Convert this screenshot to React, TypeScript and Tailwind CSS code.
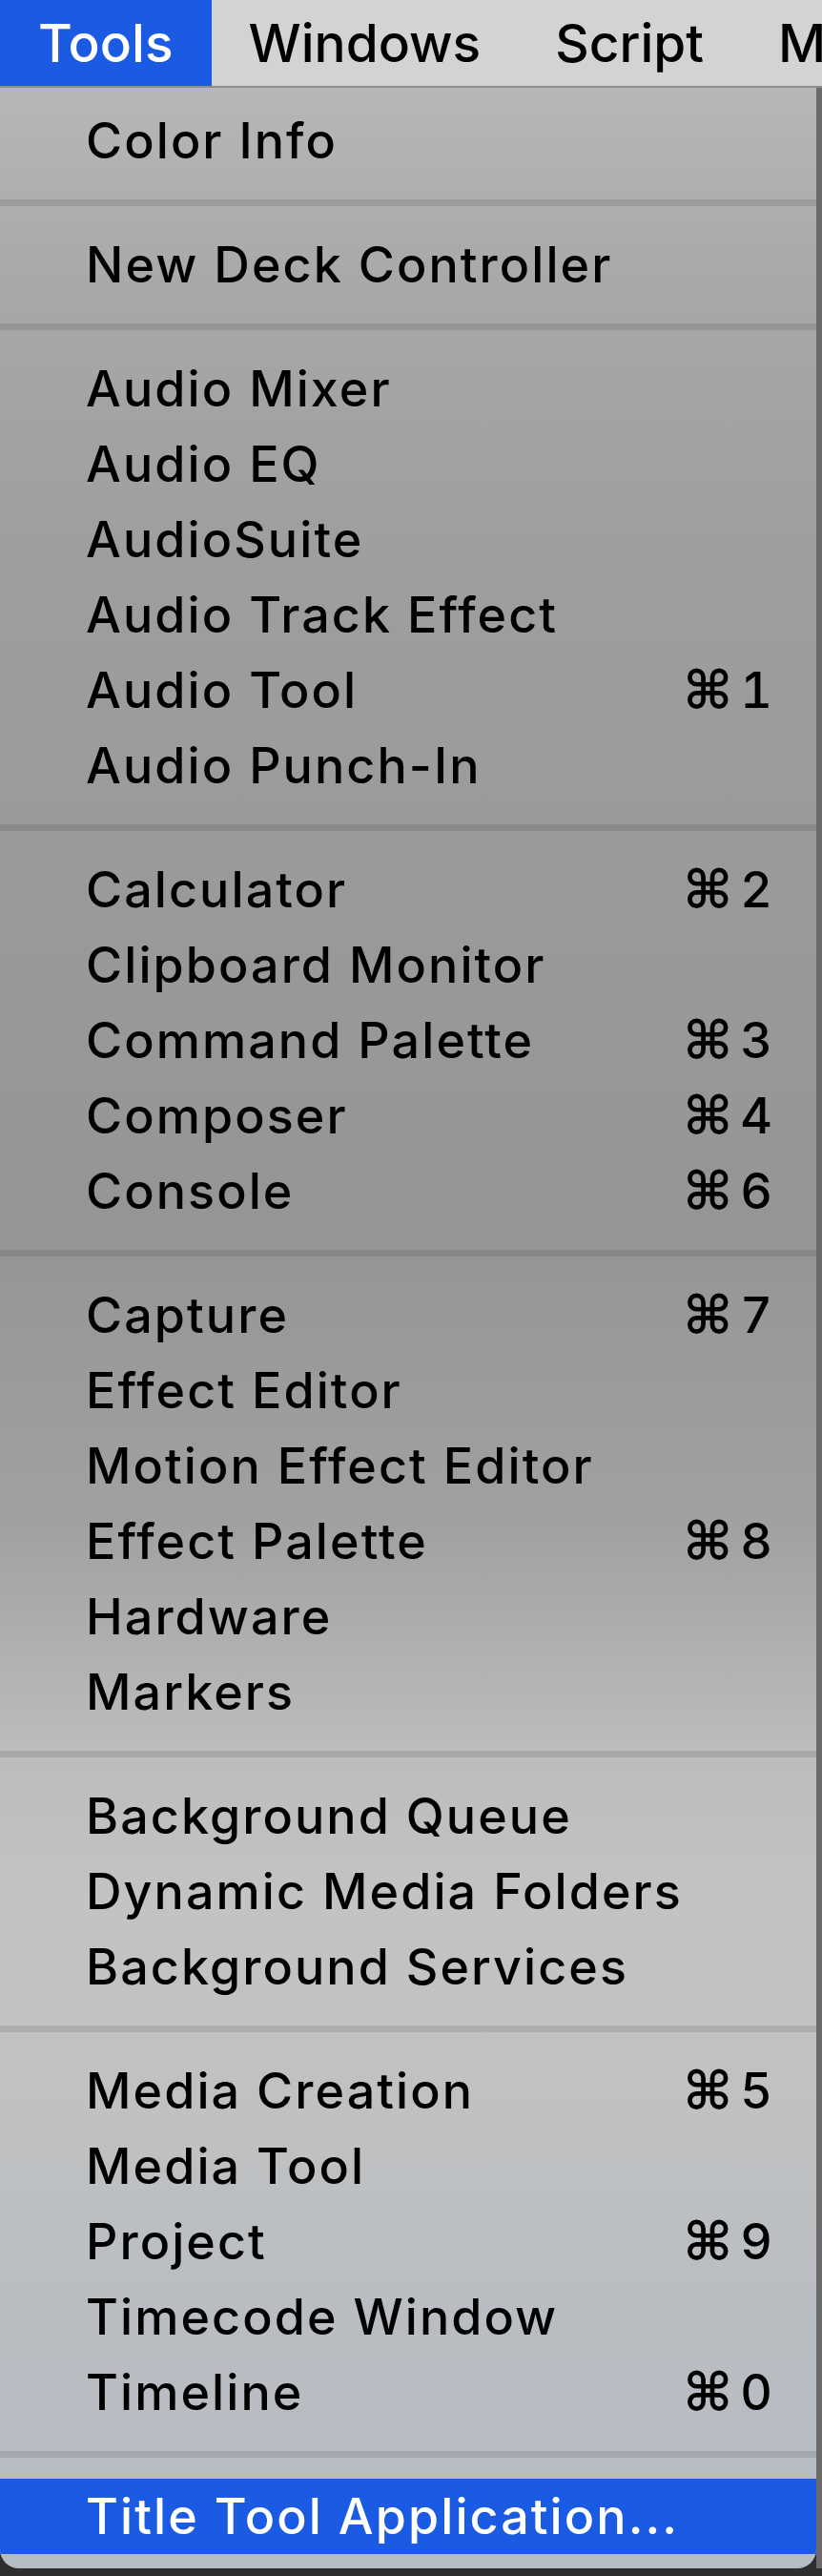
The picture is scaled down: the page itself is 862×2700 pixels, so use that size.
import React from "react";

type Item = { label: string; key?: string; active?: boolean };

const groups: Item[][] = [
  [{ label: "Color Info" }],
  [{ label: "New Deck Controller" }],
  [
    { label: "Audio Mixer" },
    { label: "Audio EQ" },
    { label: "AudioSuite" },
    { label: "Audio Track Effect" },
    { label: "Audio Tool", key: "1" },
    { label: "Audio Punch-In" },
  ],
  [
    { label: "Calculator", key: "2" },
    { label: "Clipboard Monitor" },
    { label: "Command Palette", key: "3" },
    { label: "Composer", key: "4" },
    { label: "Console", key: "6" },
  ],
  [
    { label: "Capture", key: "7" },
    { label: "Effect Editor" },
    { label: "Motion Effect Editor" },
    { label: "Effect Palette", key: "8" },
    { label: "Hardware" },
    { label: "Markers" },
  ],
  [
    { label: "Background Queue" },
    { label: "Dynamic Media Folders" },
    { label: "Background Services" },
  ],
  [
    { label: "Media Creation", key: "5" },
    { label: "Media Tool" },
    { label: "Project", key: "9" },
    { label: "Timecode Window" },
    { label: "Timeline", key: "0" },
  ],
  [{ label: "Title Tool Application...", active: true }],
];

const MenuRow = ({ item }: { item: Item }) => {
  return (
    <div
      className={
        item.active
          ? "flex h-[79px] items-center justify-between bg-[#1b5be3] pl-[90px] pr-[44px] text-white"
          : "flex h-[79px] items-center justify-between pl-[90px] pr-[44px] text-black"
      }
    >
      <span>{item.label}</span>
      {item.key && (
        <span className="flex items-center gap-[6px] tabular-nums">
          <span className="font-['DejaVu_Sans',sans-serif] text-[56px] font-bold">⌘</span>
          <span>{item.key}</span>
        </span>
      )}
    </div>
  );
};

export default function App() {
  return (
    <div className="h-[2700px] w-[862px] overflow-hidden bg-[#2e2e2e] font-['Inter','DejaVu_Sans',sans-serif] font-medium">
      {/* menu bar */}
      <div className="flex h-[92px] items-center overflow-hidden whitespace-nowrap border-b-2 border-[#8c8c8c] bg-[#d3d3d3] text-[55px] text-black">
        <div className="flex h-full items-center bg-[#1b5be3] px-[40px] text-white">Tools</div>
        <div className="px-[39px]">Windows</div>
        <div className="px-[39px]">Script</div>
        <div className="px-[39px]">Marketplace</div>
      </div>

      <div className="flex">
        <div className="w-[856px] overflow-hidden rounded-b-[20px] bg-[linear-gradient(180deg,#b7b7b7_0%,#a8a8a8_8%,#9e9e9e_19%,#999999_35%,#959595_46%,#a1a1a1_58%,#bcbcbc_67%,#c3c3c3_73%,#c0c1c2_81%,#b8bdc2_91%,#b5bcc3_100%)] pb-[15px] pt-[16px] text-[52px] tracking-[0.04em]">
          {groups.map((group, gi) => (
            <div key={gi}>
              {gi > 0 && <div className="my-[22px] h-[7px] bg-black/10" />}
              {group.map((item) => (
                <MenuRow key={item.label} item={item} />
              ))}
            </div>
          ))}
        </div>
        <div className="flex-1 bg-[#6b6b6b]" />
      </div>
    </div>
  );
}
